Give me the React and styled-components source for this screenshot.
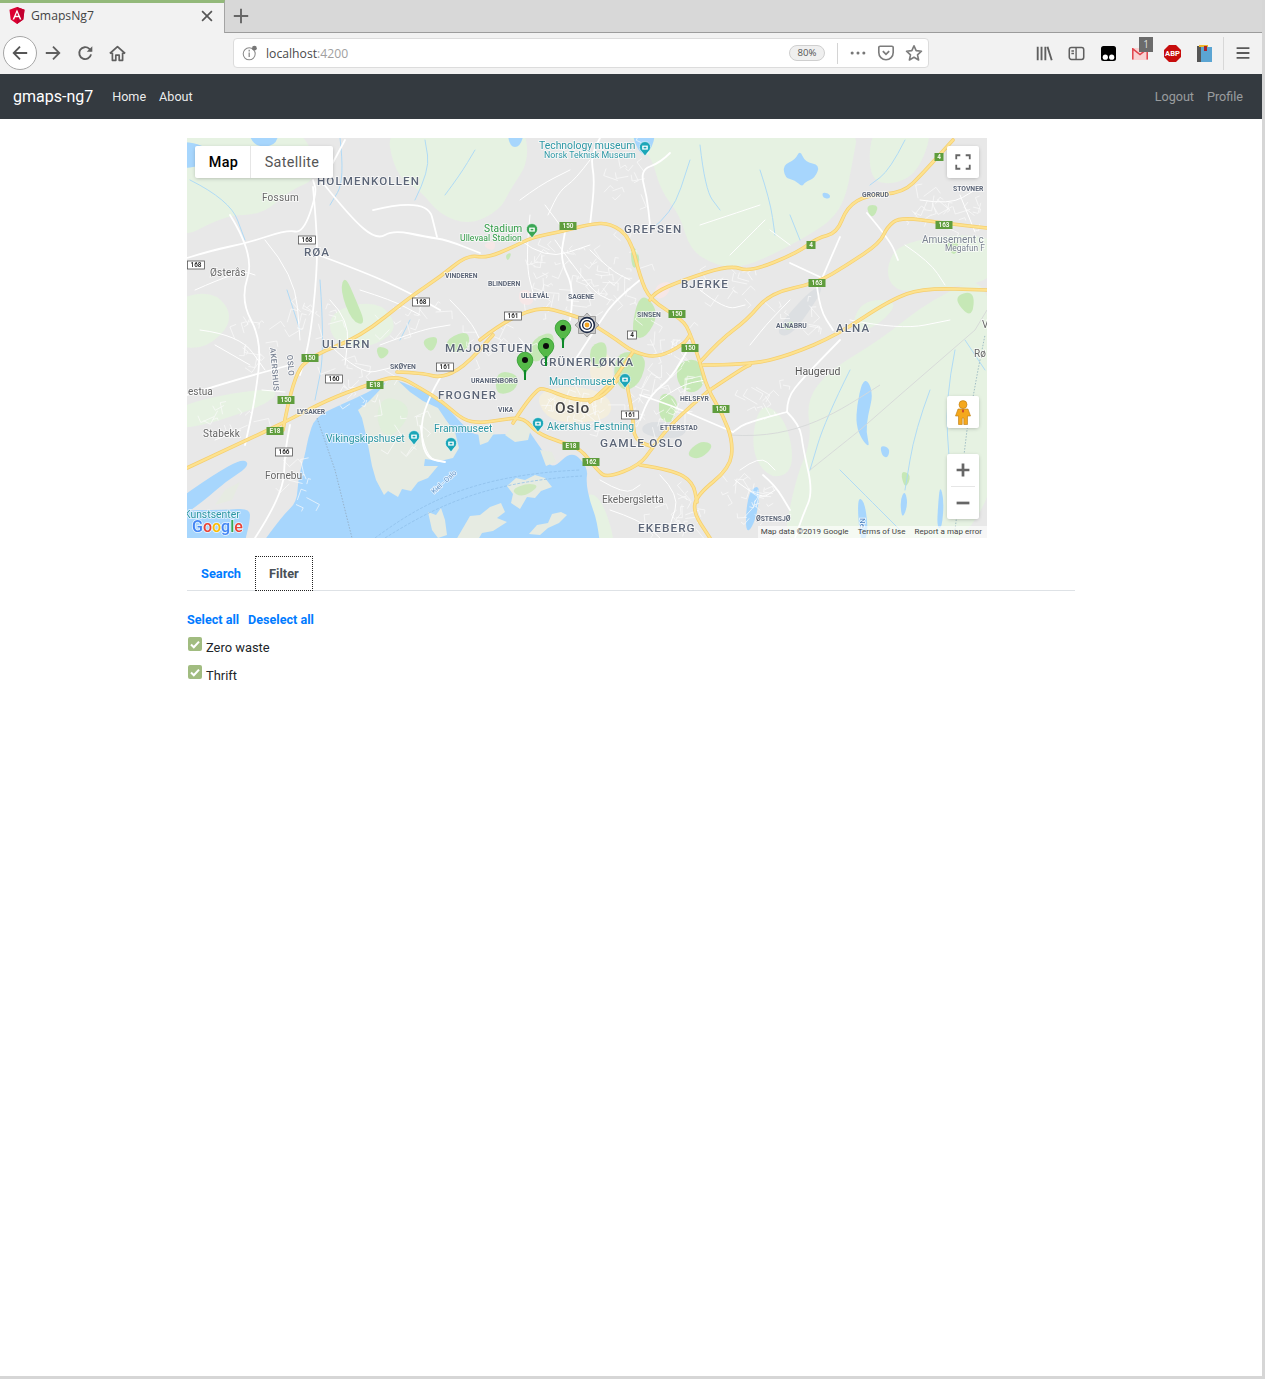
import React from 'react';
import styled, { createGlobalStyle } from 'styled-components';

const GlobalStyle = createGlobalStyle`
	html, body { margin: 0; padding: 0; background: #d6d6d6; }
	body { font-family: Roboto, "Open Sans", sans-serif; }
	* { box-sizing: border-box; }
`;

const Page = styled.div`
	width: 1262px;
	height: 1376px;
	background: #fff;
`;

/* browser chrome */
const TabStrip = styled.div`
	display: flex;
	height: 33px;
	background: #d8d8d8;
	border-bottom: 1px solid #9c9c9c;
`;
const ActiveTab = styled.div`
	display: flex;
	align-items: center;
	width: 225px;
	height: 33px;
	padding: 0 10px 5px 9px;
	background: #f2f2f2;
	border-top: 3px solid #93b97a;
	border-right: 1px solid #a4a4a4;
	font: 12.2px "Open Sans", sans-serif;
	color: #444;
`;
const TabTitle = styled.span`
	margin-left: 6px;
	flex: 1;
`;
const NewTab = styled.div`
	display: flex;
	align-items: center;
	justify-content: center;
	width: 32px;
	height: 32px;
`;
const Toolbar = styled.div`
	display: flex;
	align-items: center;
	height: 41px;
	padding: 0 0 1px 3px;
	background: #f2f2f2;
`;
const BackButton = styled.div`
	display: flex;
	align-items: center;
	justify-content: center;
	width: 34px;
	height: 34px;
	border-radius: 50%;
	background: #fff;
	border: 1px solid #a6a6a6;
`;
const ToolIcon = styled.div`
	position: relative;
	display: flex;
	align-items: center;
	justify-content: center;
	width: 32px;
	height: 32px;
	flex: none;
`;
const UrlBar = styled.div`
	display: flex;
	align-items: center;
	width: 696px;
	height: 30px;
	margin: 0 99px 0 100px;
	padding-left: 8px;
	background: #fff;
	border: 1px solid #dcdcdc;
	border-radius: 4px;
	flex: none;
`;
const UrlText = styled.span`
	margin-left: 8px;
	flex: 1;
	font: 12.2px "Open Sans", sans-serif;
	color: #4a4a4a;
	em { font-style: normal; color: #a0a0a0; }
`;
const ZoomPill = styled.span`
	width: 36px;
	height: 16px;
	border: 1px solid #cfcfcf;
	border-radius: 8px;
	background: #efefef;
	font: 9.6px/14px "Open Sans", sans-serif;
	text-align: center;
	color: #555;
`;
const UrlDivider = styled.span`
	width: 1px;
	height: 21px;
	margin: 0 6px 0 12px;
	background: #d4d4d4;
`;
const UrlIcon = styled.span`
	display: flex;
	align-items: center;
	justify-content: center;
	width: 28px;
	height: 28px;
`;
const Badge = styled.span`
	position: absolute;
	left: 15px;
	top: 0;
	width: 14px;
	height: 15px;
	background: #6b6b6b;
	color: #ddd;
	font: 10px/14px "Open Sans", sans-serif;
	text-align: center;
`;
const ToolDivider = styled.span`
	width: 1px;
	height: 33px;
	margin: 0 3px 0 3px;
	background: #d8d8d8;
	flex: none;
`;

/* app navbar */
const Navbar = styled.nav`
	display: flex;
	align-items: center;
	height: 45px;
	padding: 0 19px 0 13px;
	background: #343a40;
`;
const Brand = styled.a`
	margin-right: 19px;
	font-size: 16px;
	color: #fff;
`;
const NavLink = styled.a`
	margin-right: ${(p) => (p.$last ? 0 : 13)}px;
	font-size: 12.6px;
	color: ${(p) => (p.$muted ? 'rgba(255,255,255,.5)' : 'rgba(255,255,255,.92)')};
`;
const Spacer = styled.div`
	flex: 1;
`;

/* content */
const Container = styled.main`
	width: 888px;
	margin: 0 auto;
	padding-top: 19px;
`;
const MapWrap = styled.div`
	position: relative;
	width: 800px;
	height: 400px;
	overflow: hidden;
`;
const MapSvg = styled.svg`
	display: block;
`;
const MapTypes = styled.div`
	position: absolute;
	left: 8px;
	top: 8px;
	display: flex;
	height: 32px;
	background: #fff;
	border-radius: 2px;
	box-shadow: rgba(0,0,0,.3) 0 1px 4px -1px;
`;
const MapType = styled.div`
	display: flex;
	align-items: center;
	justify-content: center;
	width: ${(p) => p.$w}px;
	padding-left: ${(p) => (p.$on ? 2 : 0)}px;
	font-size: 14.4px;
	letter-spacing: .35px;
	font-weight: ${(p) => (p.$on ? 500 : 400)};
	color: ${(p) => (p.$on ? '#000' : '#565656')};
	border-right: ${(p) => (p.$on ? '1px solid #e6e6e6' : 'none')};
`;
const MapButton = styled.div`
	position: absolute;
	right: 8px;
	top: ${(p) => p.$top}px;
	display: flex;
	flex-direction: column;
	align-items: center;
	justify-content: center;
	width: 32px;
	height: ${(p) => p.$h || 32}px;
	background: #fff;
	border-radius: 2px;
	box-shadow: rgba(0,0,0,.3) 0 1px 4px -1px;
`;
const ZoomRule = styled.span`
	width: 24px;
	height: 1px;
	margin: 0;
	background: #e6e6e6;
`;
const ZoomHalf = styled.span`
	display: flex;
	align-items: center;
	justify-content: center;
	width: 32px;
	height: 32px;
`;
const Attribution = styled.div`
	position: absolute;
	right: 0;
	bottom: 0;
	display: flex;
	gap: 9px;
	height: 12px;
	padding: 0 5px 0 3px;
	background: rgba(255,255,255,.6);
	font: 8px/12px Roboto, sans-serif;
	letter-spacing: .04px;
	color: #444;
	white-space: nowrap;
`;

const TabsRow = styled.div`
	display: flex;
	height: 35px;
	margin-top: 18px;
	border-bottom: 1px solid #dee2e6;
`;
const TabLink = styled.a`
	height: 35px;
	padding: 0 14px;
	font-size: 12.8px;
	font-weight: 700;
	line-height: 35px;
	color: ${(p) => (p.$active ? '#495057' : '#007bff')};
	background: ${(p) => (p.$active ? '#fff' : 'transparent')};
	outline: ${(p) => (p.$active ? '1px dotted #222' : 'none')};
	outline-offset: -1px;
`;
const LinksRow = styled.div`
	display: flex;
	gap: 9px;
	margin-top: 21px;
	font-size: 12.6px;
	font-weight: 700;
	line-height: 15px;
	color: #007bff;
`;
const CheckRow = styled.label`
	display: flex;
	align-items: flex-start;
	height: 28px;
	margin-left: 1px;
	font-size: 12.9px;
	line-height: 15px;
	color: #212529;
	span { margin: 4px 0 0 4px; }
`;
const CheckList = styled.div`
	margin-top: 9px;
`;
const CheckBox = styled.i`
	display: flex;
	align-items: center;
	justify-content: center;
	width: 14px;
	height: 14px;
	margin-top: 1px;
	border-radius: 2px;
	background: #a1bc80;
`;

/* svg map labels */
const Label = styled.text`
	font-family: Roboto, sans-serif;
	font-size: ${(p) => p.$size}px;
	font-weight: ${(p) => p.$weight || 400};
	letter-spacing: ${(p) => p.$spacing || 0}px;
	fill: ${(p) => p.$color};
	stroke: rgba(255,255,255,.75);
	stroke-width: 1.6px;
	paint-order: stroke;
`;
const ShieldText = styled.text`
	font-family: Roboto, sans-serif;
	font-size: 6.4px;
	font-weight: 700;
	text-anchor: middle;
	fill: ${(p) => (p.$green ? '#f2f6e8' : '#333')};
`;

const parse = (s) => s.trim().split(/\s+/).map((a) => a.split(',').map(Number));
const pathOf = (s) => {
	const p = parse(s);
	let d = `M${p[0][0]} ${p[0][1]}`;
	for (let i = 1; i < p.length - 1; i++) {
		const mx = (p[i][0] + p[i + 1][0]) / 2;
		const my = (p[i][1] + p[i + 1][1]) / 2;
		d += `Q${p[i][0]} ${p[i][1]} ${mx} ${my}`;
	}
	const l = p[p.length - 1];
	return d + `L${l[0]} ${l[1]}`;
};
// same midpoint smoothing but closed, so areas lose their hard corners
const blobOf = (s) => {
	const p = parse(s);
	const n = p.length;
	const mid = (a, b) => [(a[0] + b[0]) / 2, (a[1] + b[1]) / 2];
	const start = mid(p[n - 1], p[0]);
	let d = `M${start[0]} ${start[1]}`;
	for (let i = 0; i < n; i++) {
		const m = mid(p[i], p[(i + 1) % n]);
		d += `Q${p[i][0]} ${p[i][1]} ${m[0]} ${m[1]}`;
	}
	return d + 'Z';
};

const FOREST = [
	'600,120 860,120 852,165 845,200 830,222 800,240 770,256 740,268 715,265 690,250 680,215 660,190 650,150',
	'385,120 522,120 530,160 510,190 500,210 470,225 440,215 420,190 395,175',
	'170,120 300,120 320,178 290,190 262,215 225,215 170,245',
	'1000,268 1000,560 780,560 795,480 812,440 806,400 830,370 880,340 930,300',
	'872,120 935,120 920,170 895,185 868,180',
	'900,240 1000,232 1000,280 930,290 895,292 885,270',
	'760,400 787,420 795,470 770,480 750,450',
	'170,300 215,290 235,320 205,350 170,345',
	'330,310 380,300 400,330 365,350 330,340',
	'860,300 900,300 880,325 850,335',
	'170,405 280,385 270,405 170,435',
	'300,470 320,445 322,500 300,520',
	'575,500 600,490 620,560 585,560',
];
const PARK = [
	'678,362 700,358 706,385 690,395 676,382', '620,350 648,355 640,385 622,392 612,372',
	'530,340 555,330 552,355 530,365', '447,338 470,330 468,352 446,352', '345,275 356,300 366,325 352,322 340,290',
	'640,290 660,312 645,340 630,335', '497,370 520,375 515,392 495,395', '660,390 680,400 672,425 658,418',
	'780,325 795,320 790,332', '375,345 392,350 380,362', '700,440 715,445 700,460 685,455',
	'505,255 512,252 508,262', '900,470 912,475 905,490', '630,240 642,260 632,272', '590,345 608,340 605,370 590,365',
	'865,205 880,205 872,220', '944,243 960,240 955,258', '952,297 975,290 972,320', '420,340 440,335 432,355',
];
const RAIL_YARD = ['775,330 810,290 826,285 800,325 785,338', '645,420 690,425 680,440 640,435', '560,412 590,408 600,420 570,424'];
const URBAN = ['535,392 575,385 610,395 612,418 575,424 545,418', '590,355 610,350 615,385 590,385'];
const HOSPITAL = ['518,290 532,290 534,305 520,305', '655,285 672,280 668,296 655,300', '481,245 496,240 494,252'];
const WATER_POLY = [
	'315,417 340,405 367,393 393,378 415,388 428,392 445,405 463,425 475,436 500,434 515,434 525,425 535,440 545,454 552,470 572,450 588,468 586,482 590,502 597,520 602,560 250,560 283,515 297,502 298,478 305,455 308,438',
	'170,505 213,475 243,458 250,466 225,482 205,500 170,525',
	'170,510 225,510 250,508 250,522 240,560 170,560',
	'247,130 280,130 275,146 255,147', '170,140 208,145 210,165 170,170', '507,130 525,130 520,147 510,147',
	'630,130 657,130 650,153 640,155', '783,165 795,160 800,150 805,162 820,165 815,178 805,182 802,187 795,180 785,178',
	'822,192 830,194 830,199 823,198',
];
const LAKES = [
	'862,382 868,380 873,395 868,415 866,432 870,448 862,440 856,425 857,405',
	'880,445 890,448 888,458 882,456', '750,490 760,485 758,510 752,528 746,532 746,510',
	'857,498 864,500 868,525 866,540 860,540', '940,485 944,500 942,528 937,528 938,505',
	'905,490 908,505 902,520 900,500',
];
// coast lines stay jagged, these are plain polygons
const LAND_POLY = [
	'393,376 410,392 423,401 438,408 446,420 455,432 459,448 453,458 440,461 425,459 424,466 438,466 428,478 418,482 411,491 402,489 398,497 388,491 384,495 376,480 372,466 369,450 366,435 362,418 358,410 368,402 375,395',
	'507,486 516,478 525,480 535,475 545,478 552,487 541,491 535,498 527,497 520,509 511,503 513,494',
	'529,534 537,525 548,523 552,514 561,512 567,515 559,523 548,528 540,535',
	'428,512 436,515 441,508 445,520 447,535 438,538 432,530',
	'456,540 463,528 470,516 480,515 490,507 501,503 505,512 497,518 507,522 493,531 482,533 478,540',
	'520,418 532,425 528,440 515,442 505,435',
	'478,432 495,432 488,442 480,445',
	'540,450 552,452 556,462 546,466',
	'225,490 240,482 232,500 215,505',
];
const ROADS = [
	'187,468 243,442 283,423 327,400 367,385 397,375 420,388 443,402 463,420 480,423 500,420 523,417 537,433 560,442 580,448 597,470 607,478 640,465 653,447 673,422 707,392',
	'283,430 293,375 313,355 360,337 410,297 440,277 467,255 487,258 513,247 533,237 560,232 590,224 610,223 630,237 640,277 650,300 683,320 690,333 700,362 707,388 723,415 733,442 730,468 697,495 693,512 710,538',
	'650,300 653,293 683,280 730,265 750,272 797,253 817,238 837,233 847,207 867,195 903,193 923,173 953,140',
	'700,362 720,340 747,320 770,293 817,283 847,265 880,243 887,227 900,217 943,223 987,228',
	'703,365 750,365 790,355 837,335 890,300 923,288 987,290',
	'710,390 743,368 750,365',
	'397,372 423,373 440,378 463,368 493,335',
	'480,340 527,303 580,317 597,327 617,340 633,352 657,358 683,345 690,335',
	'513,423 523,407 537,390 543,388 573,400 600,400 620,377',
	'640,465 673,470 693,482 697,502',
	'627,385 633,415 634,440 653,447',
	'590,402 610,385 622,368 633,352',
];
const MAJOR = [
	'187,258 213,250 247,243 287,230 303,233 317,193 313,180',
	'313,187 317,230 317,273 310,340 300,375',
	'323,183 350,217 377,240 393,230 427,237 447,240 480,253',
	'313,253 367,273 410,293 440,310',
	'373,210 427,197 437,237',
	'787,412 800,425 803,448 813,492 803,515 795,538',
	'787,412 747,422 733,432',
	'787,412 787,398 803,378 840,340',
	'817,287 820,310 833,330',
	'820,283 840,237',
	'790,263 820,277',
	'867,213 890,240 898,260',
	'670,153 660,163 640,170 647,197 650,225',
	'255,538 283,495 285,452 290,425',
	'345,140 322,183',
	'600,138 590,155 595,180 590,225',
	'440,378 430,395 420,425 425,458 445,462',
	'570,320 575,290 560,260 565,232',
	'640,280 615,300 598,325 575,360',
	'690,345 675,375 650,395 640,420',
	'733,432 700,418 670,405 640,395',
	'763,475 775,485 790,510',
	'187,395 235,380 290,365',
	'230,215 255,255 240,300 262,340 255,400 245,445',
];
const MINOR = [
	'200,330 240,335 265,370', '265,240 295,275 300,340', '360,290 392,300 420,315', '450,300 470,320 480,340',
	'330,300 350,320 345,365', '380,345 420,330 450,325', '590,160 575,180 560,190 548,215', '520,200 540,185 570,170',
	'530,215 525,262 535,300', '545,205 560,225', '555,240 590,290 610,300', '520,240 545,260 590,245',
	'590,250 610,270 630,280', '700,225 730,215 760,205', '730,255 750,235 765,220', '770,230 790,245',
	'920,200 950,205 975,190', '960,195 975,232', '905,245 930,262 945,285', '700,290 725,310 745,305',
	'790,300 770,320 750,345', '850,320 900,330 950,320', '660,400 680,385 705,380', '740,470 760,455 775,470',
	'735,480 760,500 775,490', '610,510 640,520 660,538', '600,480 625,495 640,485', '660,475 680,495 670,525',
	'195,290 240,270 255,275', '215,345 250,365', '262,390 285,392', '215,440 240,430', '330,345 360,375 390,368',
];
const STREAMS = [
	'340,138 345,180 330,205', '445,195 460,175 475,150', '415,200 430,170 425,140', '700,145 705,190 720,210',
	'760,170 770,200 775,235', '790,215 800,240', '650,230 672,215 690,160', '905,140 890,170 870,185',
	'850,370 825,420 810,470', '930,390 915,430 905,490', '955,350 945,400 950,470', '965,340 985,370',
	'840,470 880,510 900,530', '190,180 230,200 245,240', '287,290 300,330', '320,280 325,350 315,400',
	'410,320 400,340',
];
// residential street texture: [x, y, w, h, count]
const NEIGHBOURHOODS = [
	[535, 245, 95, 70, 48], [590, 240, 50, 60, 16], [640, 320, 50, 60, 22], [625, 385, 70, 50, 26], [470, 330, 60, 30, 16],
	[330, 355, 60, 50, 20], [285, 285, 45, 45, 14], [700, 270, 60, 30, 14], [745, 385, 40, 30, 12], [640, 490, 60, 40, 20],
	[725, 480, 50, 40, 20], [890, 195, 50, 25, 12], [945, 200, 38, 30, 12], [235, 310, 40, 60, 14], [205, 405, 50, 25, 10],
	[285, 460, 22, 50, 10], [380, 300, 60, 30, 12], [770, 300, 50, 30, 10], [540, 395, 70, 28, 24], [600, 140, 50, 60, 14],
	[385, 410, 40, 50, 8],
];
let seed = 17;
const rnd = () => {
	seed = (seed * 16807) % 2147483647;
	return seed / 2147483647;
};
const STREET_D = NEIGHBOURHOODS.map(([x, y, w, h, n]) => {
	let d = '';
	for (let i = 0; i < n; i++) {
		const sx = x + rnd() * w;
		const sy = y + rnd() * h;
		const a = rnd() * Math.PI * 2;
		const l = 5 + rnd() * 12;
		const ex = sx + Math.cos(a) * l;
		const ey = sy + Math.sin(a) * l;
		d += `M${sx.toFixed(1)} ${sy.toFixed(1)}L${ex.toFixed(1)} ${ey.toFixed(1)}L${(ex + Math.cos(a + 1.57) * l * 0.5).toFixed(1)} ${(ey + Math.sin(a + 1.57) * l * 0.5).toFixed(1)}`;
	}
	return d;
}).join('');
const SHIELDS = [
	[568, 226, '150', 1], [939, 157, '4', 1], [944, 225, '163', 1], [811, 245, '4', 1], [817, 283, '163', 1], [677, 314, '150', 1],
	[690, 348, '150', 1], [310, 358, '150', 1], [286, 400, '150', 1], [375, 385, 'E18', 1], [275, 431, 'E18', 1], [571, 446, 'E18', 1],
	[591, 462, '162', 1], [721, 409, '150', 1], [307, 240, '168'], [196, 265, '168'], [421, 302, '168'], [513, 316, '161'], [632, 335, '4'],
	[445, 367, '161'], [334, 379, '160'], [284, 452, '166'], [630, 415, '161'],
];
const DISTRICT = '#5b6577';
const LABELS = [
	['HOLMENKOLLEN', 317, 185, 11.6, 500, 1.1, DISTRICT], ['GREFSEN', 624, 233, 11.6, 500, 1.2, DISTRICT], ['BJERKE', 681, 288, 11.6, 500, 1.05, DISTRICT],
	['RØA', 304, 256, 11.6, 500, 1.05, DISTRICT], ['ULLERN', 322, 348, 11.6, 500, 1.05, DISTRICT], ['MAJORSTUEN', 445, 352, 11.8, 500, 1.1, DISTRICT],
	['GRÜNERLØKKA', 540, 366, 11.8, 500, 1.05, DISTRICT], ['ALNA', 836, 332, 11.6, 500, 1.05, DISTRICT], ['FROGNER', 438, 399, 11.6, 500, 1.05, DISTRICT],
	['GAMLE OSLO', 600, 447, 11.8, 500, 1.2, DISTRICT], ['EKEBERG', 638, 532, 11.8, 500, 1.05, DISTRICT],
	['VINDEREN', 445, 278, 6.8, 700, 0, DISTRICT], ['BLINDERN', 488, 286, 6.8, 700, 0, DISTRICT], ['ULLEVÅL', 521, 298, 6.8, 700, 0, DISTRICT],
	['SAGENE', 568, 299, 6.8, 700, 0, DISTRICT], ['SINSEN', 637, 317, 6.8, 700, 0, DISTRICT], ['ALNABRU', 776, 328, 6.8, 700, 0, DISTRICT],
	['GRORUD', 862, 197, 6.8, 700, 0, DISTRICT], ['STOVNER', 953, 191, 6.8, 700, 0, DISTRICT], ['SKØYEN', 390, 369, 6.8, 700, 0, DISTRICT],
	['URANIENBORG', 471, 383, 6.8, 700, 0, DISTRICT], ['LYSAKER', 297, 414, 6.8, 700, 0, DISTRICT], ['VIKA', 498, 412, 6.8, 700, 0, DISTRICT],
	['HELSFYR', 680, 401, 6.8, 700, 0, DISTRICT], ['ETTERSTAD', 660, 430, 6.8, 700, 0, DISTRICT], ['ØSTENSJØ', 756, 521, 6.8, 700, 0, DISTRICT],
	['Fossum', 262, 201, 10, 400, 0.2, '#666'], ['Østerås', 210, 276, 10, 400, 0.2, '#666'], ['Haugerud', 795, 375, 10.4, 400, 0, '#555'],
	['estua', 188, 395, 10, 400, 0, '#666'], ['Stabekk', 203, 437, 10, 400, 0.2, '#666'], ['Fornebu', 265, 479, 10.2, 400, 0, '#666'],
	['Ekebergsletta', 602, 503, 10.2, 400, 0, '#666'], ['Amusement c', 922, 243, 10, 400, 0, '#7a8290'], ['Megafun F', 945, 251, 8.4, 400, 0, '#7a8290'],
	['Rø', 974, 357, 10, 400, 0, '#666'], ['V', 982, 328, 10, 400, 0, '#666'], ['Oslo', 555, 413, 15.4, 500, 1, '#444'],
	['Technology museum', 539, 149, 10.4, 400, 0, '#2b96a3'], ['Norsk Teknisk Museum', 544, 158, 8.8, 400, 0, '#2b96a3'], ['Munchmuseet', 549, 385, 10.4, 400, 0, '#2b96a3'],
	['Akershus Festning', 547, 430, 10.4, 400, 0.1, '#2b96a3'], ['Frammuseet', 434, 432, 10.4, 400, 0, '#2b96a3'], ['Vikingskipshuset', 326, 442, 10.4, 400, 0, '#2b96a3'],
	['Kunstsenter', 184, 518, 10.4, 400, 0, '#2b96a3'], ['Stadium', 484, 232, 10.2, 400, 0.1, '#2f9a45'], ['Ullevaal Stadion', 460, 241, 8.7, 400, 0, '#2f9a45'],
];
const POIS = [[645, 148], [625, 380], [538, 424], [451, 444], [414, 437]];
const PINS = [[563, 328], [546, 346], [525, 360]];

const Blobs = ({ list, fill }) => list.map((p, i) => <path key={i} d={blobOf(p)} fill={fill} />);
const Lines = ({ list, stroke, width }) =>
	list.map((p, i) => <path key={i} d={pathOf(p)} fill="none" stroke={stroke} strokeWidth={width} strokeLinecap="round" strokeLinejoin="round" />);

const Poi = ({ x, y, color }) => (
	<g transform={`translate(${x} ${y})`}>
		<path d="M0 8L-3.4 3.6A5.6 5.6 0 1 1 3.4 3.6Z" fill={color} stroke="#fff" strokeWidth=".6" />
		<rect x="-2.8" y="-2.4" width="5.6" height="4" fill="#fff" />
		<rect x="-1.4" y="-1.2" width="2.8" height="1.6" fill={color} />
	</g>
);

const Pin = ({ x, y }) => (
	<g transform={`translate(${x} ${y})`}>
		<path d="M0 19.5L-.8 12C-2.5 9 -7.8 5.5 -7.8 0A7.8 7.8 0 0 1 7.8 0C7.8 5.5 2.5 9 .8 12Z" fill="#55b948" stroke="#2c9a2c" strokeWidth=".8" />
		<path d="M-1 10H1V20H-1Z" fill="#0e8a2a" />
		<circle r="3" fill="#0b0b0b" />
	</g>
);

const OsloMap = () => (
	<MapSvg width="800" height="400" viewBox="187 138 800 400">
		<defs>
			<filter id="soft" x="0" y="0" width="100%" height="100%">
				<feGaussianBlur stdDeviation=".35" />
			</filter>
		</defs>
		<g filter="url(#soft)">
			<rect x="187" y="138" width="800" height="400" fill="#e8e8e8" />
			<Blobs list={FOREST} fill="#e6f2e2" />
			<Blobs list={RAIL_YARD} fill="#dcdfe2" />
			<Blobs list={URBAN} fill="#f3eedd" />
			<Blobs list={HOSPITAL} fill="#f6e7e7" />
			<Blobs list={PARK} fill="#c6e8b6" />
			<Blobs list={WATER_POLY} fill="#a7d6fd" />
			<Blobs list={LAKES} fill="#a7d6fd" />
			{LAND_POLY.map((p) => <polygon key={p} points={p} fill="#e6ebe2" />)}
			<path d={blobOf('510,490 528,483 540,486 522,498')} fill="#cfe8bf" />
			<path d={blobOf('385,440 375,415 385,395 410,405 405,425')} fill="#e0efdb" />
			<Lines list={STREAMS} stroke="#a9d8f7" width=".9" />
			<path d={STREET_D} fill="none" stroke="#fbfbfb" strokeWidth=".7" />
			<Lines list={MINOR} stroke="#fff" width="1" />
			<Lines list={MAJOR} stroke="#fff" width="1.8" />
			<path d="M420 425C425 455 430 462 445 462" fill="none" stroke="#fff" strokeWidth="1.2" />
			<path d="M810 470L860 430 900 395 975 330 987 310" fill="none" stroke="#d6d8d8" strokeWidth=".9" />
			<path d="M730 435C800 440 840 410 880 385" fill="none" stroke="#d6d8d8" strokeWidth=".9" />
			<path d="M317 418L335 470 352 538" fill="none" stroke="#8fa3b5" strokeWidth=".7" strokeDasharray="1.5 1.5" />
			<path d="M375 538C420 505 470 475 580 470" fill="none" stroke="#8dbde8" strokeWidth=".7" strokeDasharray="3 1.5" />
			<path d="M385 538C430 510 480 482 582 476" fill="none" stroke="#8dbde8" strokeWidth=".7" strokeDasharray="3 1.5" />
			<path d="M955 530L967 430 978 370 985 335" fill="none" stroke="#8fb0bd" strokeWidth=".8" strokeDasharray="1.5 1.5" />
			<Lines list={ROADS} stroke="#f5cf70" width="3.6" />
			<Lines list={ROADS} stroke="#fde28f" width="2.2" />
			{SHIELDS.map(([x, y, t, green], i) => {
				const w = t.length === 1 ? 9 : 17;
				return (
					<g key={i}>
						<rect x={x - w / 2} y={y - 4} width={w} height="8" fill={green ? '#5f9d3e' : '#fff'} stroke={green ? 'none' : '#555'} strokeWidth=".8" />
						<ShieldText x={x} y={y + 2.4} $green={!!green}>{t}</ShieldText>
					</g>
				);
			})}
			{LABELS.map(([t, x, y, size, weight, spacing, color]) => (
				<Label key={t} x={x} y={y} $size={size} $weight={weight} $spacing={spacing} $color={color}>{t}</Label>
			))}
			<Label x="0" y="0" transform="translate(270 348) rotate(85)" $size={8} $weight={500} $spacing={.4} $color="#7b8494">AKERSHUS</Label>
			<Label x="0" y="0" transform="translate(287 355) rotate(85)" $size={8} $weight={500} $spacing={.4} $color="#7b8494">OSLO</Label>
			<Label x="0" y="0" transform="translate(434 494) rotate(-42)" $size={7} $color="#5f93c9">Kiel - Oslo</Label>
			<Label x="0" y="0" transform="translate(860 518) rotate(90)" $size={8} $color="#4a7fc0">Ne</Label>
			{POIS.map(([x, y]) => <Poi key={x} x={x} y={y} color="#1ba6b8" />)}
			<Poi x={532} y={230} color="#3aa655" />
			<Label x="192" y="532" $size={16} $weight={500} $color="#4285f4">
				G<tspan fill="#ea4335">o</tspan><tspan fill="#fbbc05">o</tspan><tspan fill="#4285f4">g</tspan><tspan fill="#34a853">l</tspan><tspan fill="#ea4335">e</tspan>
			</Label>
		</g>
		{PINS.map(([x, y]) => <Pin key={x} x={x} y={y} />)}
		<g transform="translate(587 325)">
			<path d="M0-12L3.2-8.5 8.5-8.5 8.5-3.2 12 0 8.5 3.2 8.5 8.5 3.2 8.5 0 12-3.2 8.5-8.5 8.5-8.5 3.2-12 0-8.5-3.2-8.5-8.5-3.2-8.5Z" fill="#c9c9c9" stroke="#777" strokeWidth=".6" />
			<circle r="7.4" fill="#fff" stroke="#1d2a45" strokeWidth="1.6" />
			<circle r="4.4" fill="none" stroke="#1d2a45" strokeWidth="1.3" />
			<circle r="2.4" fill="#f5a623" />
		</g>
	</MapSvg>
);

const Ico = ({ size = 20, children, ...rest }) => (
	<svg width={size} height={size} viewBox="0 0 20 20" fill="none" {...rest}>{children}</svg>
);
const G = '#5f5f5f';

const App = () => (
	<Page>
		<GlobalStyle />
		<TabStrip>
			<ActiveTab>
				<svg width="16" height="17" viewBox="0 0 16 17">
					<path d="M8 0L15.5 2.7 14.3 12.6 8 17 1.7 12.6 .5 2.7Z" fill="#dd0031" />
					<path d="M8 0L15.5 2.7 14.3 12.6 8 17Z" fill="#c3002f" />
					<path d="M8 2.6L3.6 12.4H5.2L6.1 10.2H9.9L10.8 12.4H12.4ZM9.3 8.8H6.7L8 5.6Z" fill="#fff" />
				</svg>
				<TabTitle>GmapsNg7</TabTitle>
				<Ico size={14}>
					<path d="M3 3L17 17M17 3L3 17" stroke="#555" strokeWidth="2.4" />
				</Ico>
			</ActiveTab>
			<NewTab>
				<Ico size={16}>
					<path d="M10 1V19M1 10H19" stroke="#666" strokeWidth="2.4" />
				</Ico>
			</NewTab>
		</TabStrip>
		<Toolbar>
			<BackButton>
				<Ico size={18}>
					<path d="M18 10H3M10 3L3 10 10 17" stroke="#555" strokeWidth="2" />
				</Ico>
			</BackButton>
			<ToolIcon>
				<Ico size={18}>
					<path d="M2 10H17M10 3L17 10 10 17" stroke={G} strokeWidth="2" />
				</Ico>
			</ToolIcon>
			<ToolIcon>
				<Ico size={17}>
					<path d="M16.5 11A7 7 0 1 1 14.5 4.5L17 7" stroke={G} strokeWidth="2.2" />
					<path d="M18 1.5V8H11.5Z" fill={G} />
				</Ico>
			</ToolIcon>
			<ToolIcon>
				<Ico size={17}>
					<path d="M1 10L10 2 19 10M4 9V18H8V12H12V18H16V9" stroke={G} strokeWidth="2" strokeLinejoin="round" />
				</Ico>
			</ToolIcon>
			<UrlBar>
				<Ico size={16}>
					<circle cx="9" cy="11" r="7.5" stroke="#8a8a8a" strokeWidth="1.3" />
					<path d="M9 9.5V15M9 6V8" stroke="#8a8a8a" strokeWidth="1.6" />
					<circle cx="15.5" cy="4" r="3" fill="#777" />
				</Ico>
				<UrlText>localhost<em>:4200</em></UrlText>
				<ZoomPill>80%</ZoomPill>
				<UrlDivider />
				<UrlIcon>
					<Ico size={18}>
						<circle cx="3.5" cy="10" r="1.7" fill="#777" />
						<circle cx="10" cy="10" r="1.7" fill="#777" />
						<circle cx="16.5" cy="10" r="1.7" fill="#777" />
					</Ico>
				</UrlIcon>
				<UrlIcon>
					<Ico size={18}>
						<path d="M3.5 2.5H16.5Q18 2.5 18 4V9.5A8 8 0 0 1 2 9.5V4Q2 2.5 3.5 2.5Z" stroke="#7c7c7c" strokeWidth="1.8" />
						<path d="M6.5 8L10 11.5 13.5 8" stroke="#7c7c7c" strokeWidth="2" />
					</Ico>
				</UrlIcon>
				<UrlIcon>
					<Ico size={18}>
						<path d="M10 2L12.4 7.4 18.3 8 13.9 12 15.1 17.8 10 14.8 4.9 17.8 6.1 12 1.7 8 7.6 7.4Z" stroke="#7c7c7c" strokeWidth="1.8" strokeLinejoin="round" />
					</Ico>
				</UrlIcon>
			</UrlBar>
			<ToolIcon>
				<Ico size={17}>
					<path d="M2 2V18M6.5 2V18M11 2V18M13.5 2L18.5 18" stroke={G} strokeWidth="2.2" />
				</Ico>
			</ToolIcon>
			<ToolIcon>
				<Ico size={17}>
					<rect x="1.5" y="3" width="17" height="14" rx="2.5" stroke={G} strokeWidth="1.8" />
					<path d="M9.5 3V17M4 7H7M4 10H7" stroke={G} strokeWidth="1.6" />
				</Ico>
			</ToolIcon>
			<ToolIcon>
				<svg width="15" height="15" viewBox="0 0 15 15">
					<rect width="15" height="15" rx="2.5" fill="#000" />
					<circle cx="4.3" cy="11.2" r="2.6" fill="#fff" />
					<circle cx="10.7" cy="11.2" r="2.6" fill="#fff" />
				</svg>
			</ToolIcon>
			<ToolIcon>
				<svg width="16" height="12" viewBox="0 0 16 12" style={{ marginTop: 2 }}>
					<rect width="16" height="12" fill="#f9d3d3" />
					<path d="M.8 11.5V.8L8 6.5 15.2.8V11.5" fill="none" stroke="#e0434b" strokeWidth="1.5" />
				</svg>
				<Badge>1</Badge>
			</ToolIcon>
			<ToolIcon>
				<svg width="17" height="17" viewBox="0 0 17 17">
					<path d="M5 0H12L17 5V12L12 17H5L0 12V5Z" fill="#c70d0d" />
					<text x="8.5" y="11" textAnchor="middle" fill="#fff" fontFamily="Roboto, sans-serif" fontWeight="700" fontSize="7.6">ABP</text>
				</svg>
			</ToolIcon>
			<ToolIcon>
				<svg width="15" height="17" viewBox="0 0 15 17">
					<rect width="5" height="16" y="1" fill="#555" />
					<rect x="4" y="2" width="11" height="15" fill="#5ba5d3" />
					<rect x="2" width="9" height="2" fill="#f1b72c" />
					<rect x="7" y="1" width="3" height="5" fill="#a8242c" />
				</svg>
			</ToolIcon>
			<ToolDivider />
			<ToolIcon>
				<Ico size={16}>
					<path d="M2 4H18M2 10H18M2 16H18" stroke="#5a5a5a" strokeWidth="2.2" />
				</Ico>
			</ToolIcon>
		</Toolbar>
		<Navbar>
			<Brand>gmaps-ng7</Brand>
			<NavLink>Home</NavLink>
			<NavLink>About</NavLink>
			<Spacer />
			<NavLink $muted>Logout</NavLink>
			<NavLink $muted $last>Profile</NavLink>
		</Navbar>
		<Container>
			<MapWrap>
				<OsloMap />
				<MapTypes>
					<MapType $on $w={56}>Map</MapType>
					<MapType $w={82}>Satellite</MapType>
				</MapTypes>
				<MapButton $top={8}>
					<Ico size={18}>
						<path d="M2.5 7V2.5H7M13 2.5H17.5V7M17.5 13V17.5H13M7 17.5H2.5V13" stroke="#666" strokeWidth="2" />
					</Ico>
				</MapButton>
				<MapButton $top={258}>
					<svg width="16" height="25" viewBox="0 0 16 25">
						<circle cx="8" cy="4.6" r="4" fill="#f5a81c" stroke="#b97a10" strokeWidth=".6" />
						<path d="M3 9H13L15.5 16H12.5V24.5H8.8V18H7.2V24.5H3.5V16H.5Z" fill="#f5a81c" stroke="#b97a10" strokeWidth=".6" />
						<path d="M8 9L6.8 11 8 13 9.2 11Z" fill="#c8452a" />
					</svg>
				</MapButton>
				<MapButton $top={316} $h={65}>
					<ZoomHalf>
						<Ico size={16}>
							<path d="M10 2V18M2 10H18" stroke="#666" strokeWidth="3.4" />
						</Ico>
					</ZoomHalf>
					<ZoomRule />
					<ZoomHalf>
						<Ico size={16}>
							<path d="M2 10H18" stroke="#666" strokeWidth="3.4" />
						</Ico>
					</ZoomHalf>
				</MapButton>
				<Attribution>
					<span>Map data ©2019 Google</span>
					<span>Terms of Use</span>
					<span>Report a map error</span>
				</Attribution>
			</MapWrap>
			<TabsRow>
				<TabLink>Search</TabLink>
				<TabLink $active>Filter</TabLink>
			</TabsRow>
			<LinksRow>
				<a>Select all</a>
				<a>Deselect all</a>
			</LinksRow>
			<CheckList>
				{['Zero waste', 'Thrift'].map((name) => (
					<CheckRow key={name}>
						<CheckBox>
							<svg width="10" height="9" viewBox="0 0 10 9">
								<path d="M1 4.6L3.8 7.2 9 1.6" fill="none" stroke="#fff" strokeWidth="2.1" />
							</svg>
						</CheckBox>
						<span>{name}</span>
					</CheckRow>
				))}
			</CheckList>
		</Container>
	</Page>
);

export default App;
